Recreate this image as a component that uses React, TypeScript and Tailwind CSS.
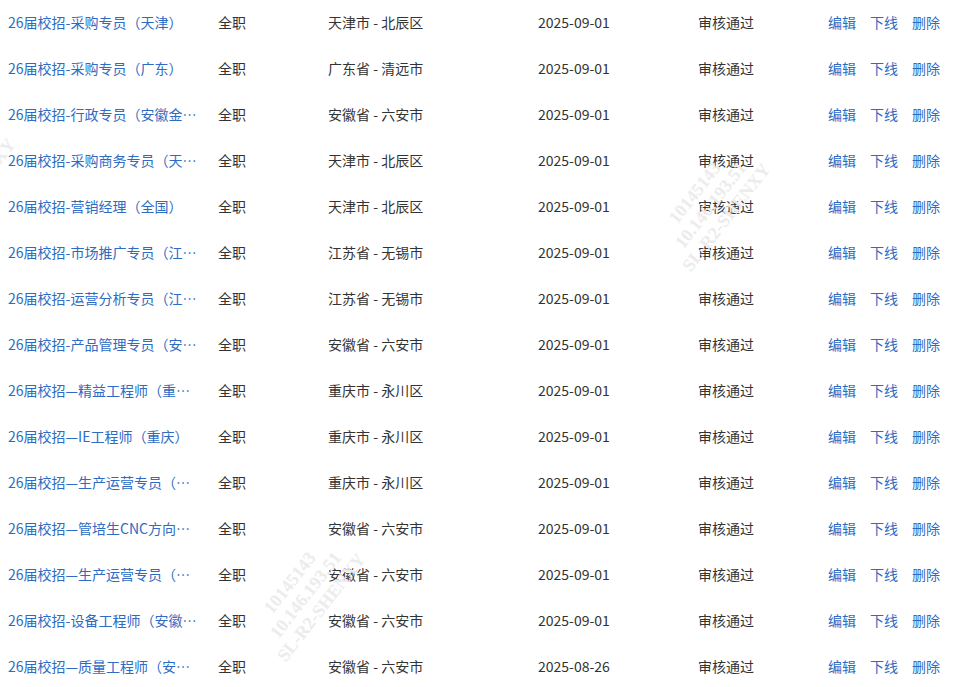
const rows = [
  { title: '26届校招-采购专员（天津）', type: '全职', loc: '天津市 - 北辰区', date: '2025-09-01' },
  { title: '26届校招-采购专员（广东）', type: '全职', loc: '广东省 - 清远市', date: '2025-09-01' },
  { title: '26届校招-行政专员（安徽金寨）', type: '全职', loc: '安徽省 - 六安市', date: '2025-09-01' },
  { title: '26届校招-采购商务专员（天津）', type: '全职', loc: '天津市 - 北辰区', date: '2025-09-01' },
  { title: '26届校招-营销经理（全国）', type: '全职', loc: '天津市 - 北辰区', date: '2025-09-01' },
  { title: '26届校招-市场推广专员（江苏）', type: '全职', loc: '江苏省 - 无锡市', date: '2025-09-01' },
  { title: '26届校招-运营分析专员（江苏）', type: '全职', loc: '江苏省 - 无锡市', date: '2025-09-01' },
  { title: '26届校招-产品管理专员（安徽）', type: '全职', loc: '安徽省 - 六安市', date: '2025-09-01' },
  { title: '26届校招—精益工程师（重庆）', type: '全职', loc: '重庆市 - 永川区', date: '2025-09-01' },
  { title: '26届校招—IE工程师（重庆）', type: '全职', loc: '重庆市 - 永川区', date: '2025-09-01' },
  { title: '26届校招—生产运营专员（重庆）', type: '全职', loc: '重庆市 - 永川区', date: '2025-09-01' },
  { title: '26届校招—管培生CNC方向（安徽）', type: '全职', loc: '安徽省 - 六安市', date: '2025-09-01' },
  { title: '26届校招—生产运营专员（安徽）', type: '全职', loc: '安徽省 - 六安市', date: '2025-09-01' },
  { title: '26届校招-设备工程师（安徽金寨）', type: '全职', loc: '安徽省 - 六安市', date: '2025-09-01' },
  { title: '26届校招—质量工程师（安徽）', type: '全职', loc: '安徽省 - 六安市', date: '2025-08-26' },
];

function Watermark({ className }: { className: string }) {
  return (
    <div
      className={`pointer-events-none absolute -rotate-[52deg] text-center font-bold leading-[20px] text-[18px] text-[#ececec] ${className}`}
      style={{ fontFamily: '"Liberation Serif", serif' }}
    >
      <div>10145143</div>
      <div>10.146.193.51</div>
      <div>SL-R2-SHENXY</div>
    </div>
  );
}

export default function App() {
  return (
    <div
      className="relative h-[687px] w-[977px] overflow-hidden bg-white text-[14px] text-[#333]"
      style={{ fontFamily: '"Noto Sans CJK SC", "Noto Sans", sans-serif' }}
    >
      <table className="-mt-px w-full table-fixed border-collapse">
        <colgroup>
          <col className="w-[210px]" />
          <col className="w-[110px]" />
          <col className="w-[210px]" />
          <col className="w-[160px]" />
          <col className="w-[130px]" />
          <col />
        </colgroup>
        <tbody>
          {rows.map((r, i) => (
            <tr key={i} className="h-[46px]">
              <td className="pl-2 pr-3">
                <div className="truncate text-[#2d6bc4]">{r.title}</div>
              </td>
              <td className="pl-2">{r.type}</td>
              <td className="pl-2">{r.loc}</td>
              <td className="pl-2">{r.date}</td>
              <td className="pl-2">审核通过</td>
              <td className="pl-2 text-[#2d6bc4]">
                <div className="flex gap-[14px]">
                  <span>编辑</span>
                  <span>下线</span>
                  <span>删除</span>
                </div>
              </td>
            </tr>
          ))}
        </tbody>
      </table>
      <Watermark className="left-[645px] top-[175px]" />
      <Watermark className="left-[240px] top-[565px]" />
      <Watermark className="-left-[110px] top-[150px]" />
    </div>
  );
}
